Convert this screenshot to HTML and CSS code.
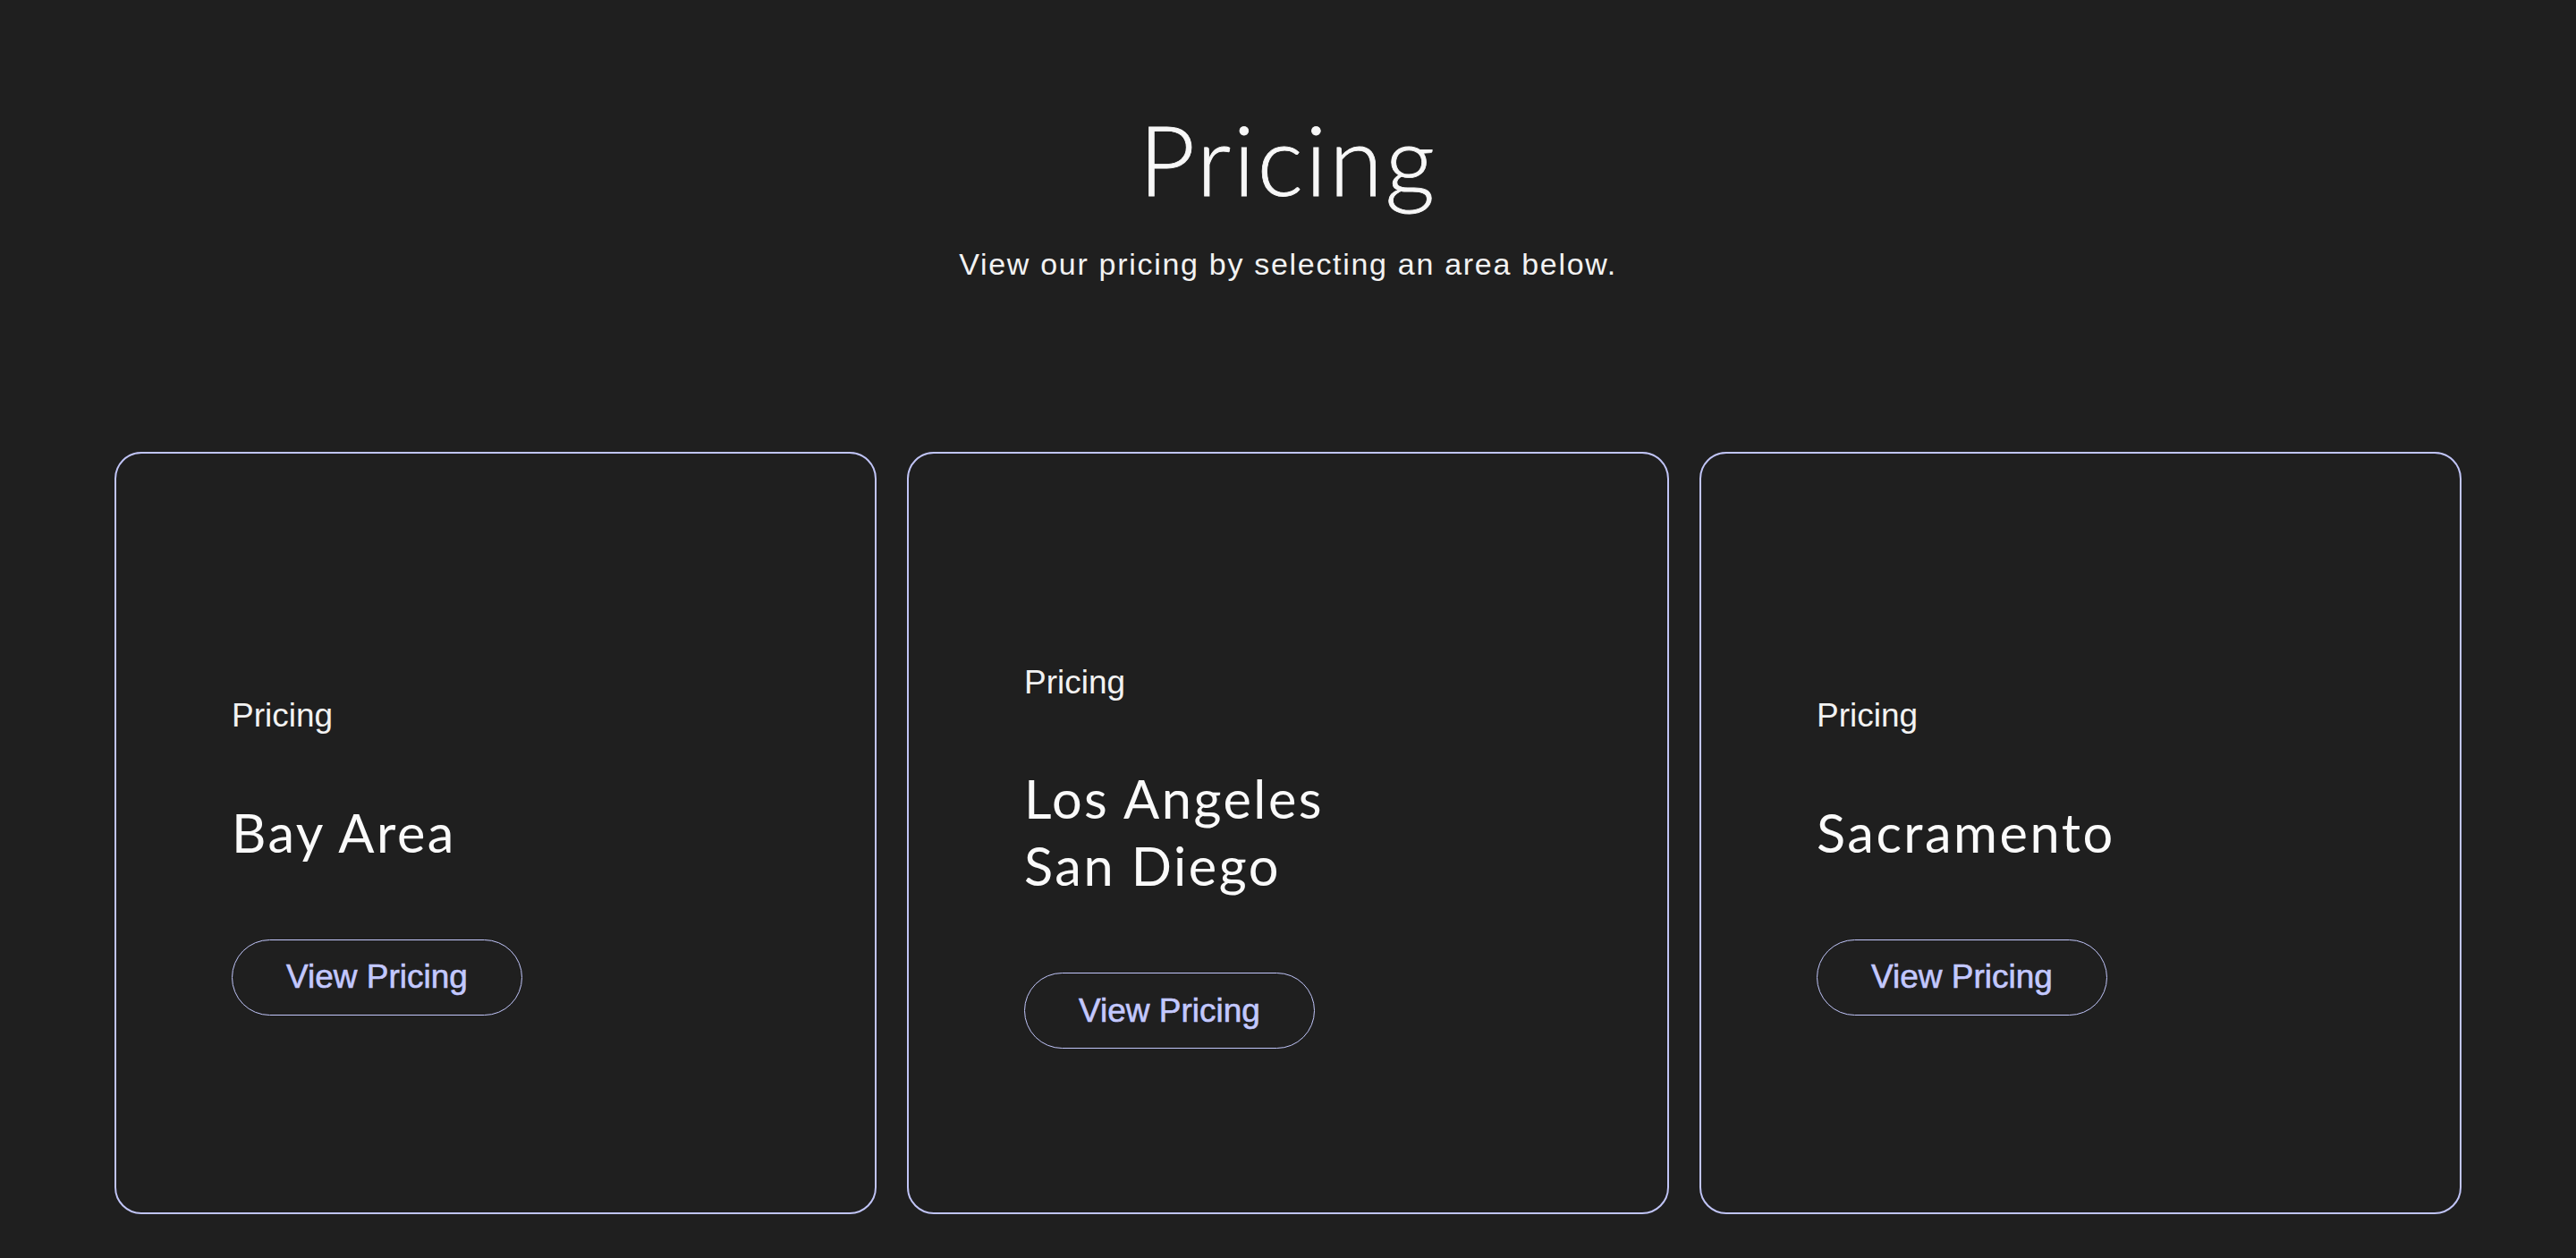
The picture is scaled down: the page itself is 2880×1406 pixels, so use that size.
FILE: index.html
```html
<!DOCTYPE html>
<html lang="en">
<head>
<meta charset="utf-8">
<title>Pricing</title>
<link rel="stylesheet" href="styles.css">
</head>
<body>
<main class="page">
  <header class="intro">
    <h1 class="intro-title">Pricing</h1>
    <p class="intro-sub">View our pricing by selecting an area below.</p>
  </header>
  <section class="cards">
    <article class="card">
      <div class="card-body">
        <p class="card-label">Pricing</p>
        <h2 class="card-title">Bay Area</h2>
        <a class="card-btn" href="#">View Pricing</a>
      </div>
    </article>
    <article class="card">
      <div class="card-body">
        <p class="card-label">Pricing</p>
        <h2 class="card-title">Los Angeles<br>San Diego</h2>
        <a class="card-btn" href="#">View Pricing</a>
      </div>
    </article>
    <article class="card">
      <div class="card-body">
        <p class="card-label">Pricing</p>
        <h2 class="card-title">Sacramento</h2>
        <a class="card-btn" href="#">View Pricing</a>
      </div>
    </article>
  </section>
</main>
</body>
</html>
```
FILE: styles.css
```css
* { box-sizing: border-box; }

html, body {
  margin: 0;
  padding: 0;
  background: #1f1f1f;
  color: #f7f7f7;
}

body {
  font-family: "Liberation Sans", Arial, sans-serif;
}

.page {
  padding: 112px 128px 0;
}

.intro {
  display: flex;
  flex-direction: column;
  align-items: center;
  gap: 32px;
}

.intro-title {
  margin: 0;
  font-family: Lato, "Liberation Sans", sans-serif;
  font-weight: 300;
  font-size: 109px;
  line-height: 1.2;
  letter-spacing: 2.5px;
  -webkit-text-stroke: 0.8px #f7f7f7;
  color: #f7f7f7;
}

.intro-sub {
  margin: 0;
  font-family: "Liberation Sans", Arial, sans-serif;
  font-size: 34px;
  line-height: 1.2;
  letter-spacing: 1.7px;
  color: #f2f2f2;
}

.cards {
  margin-top: 189px;
  display: grid;
  grid-template-columns: repeat(3, 1fr);
  gap: 34px;
}

.card {
  aspect-ratio: 1 / 1;
  border: 2px solid #c0c4f6;
  border-radius: 30px;
  padding: 52px 129px 0;
  display: flex;
  flex-direction: column;
  justify-content: center;
}

.card-body {
  display: flex;
  flex-direction: column;
  align-items: flex-start;
}

.card-label {
  margin: 0;
  font-size: 37px;
  line-height: 1.2;
  color: #f2f2f2;
}

.card-title {
  margin: 70px 0 0;
  font-family: Lato, "Liberation Sans", sans-serif;
  font-weight: 400;
  font-size: 59.5px;
  line-height: 74.9px;
  letter-spacing: 2.5px;
  color: #fafafa;
}

.card-btn {
  margin-top: 82px;
  display: inline-block;
  padding: 19.5px 60px;
  border: 1.5px solid #c1c6fa;
  border-radius: 999px;
  font-size: 37px;
  line-height: 1.2;
  color: #c3c8ff;
  -webkit-text-stroke: 0.6px #c3c8ff;
  text-decoration: none;
}
```
